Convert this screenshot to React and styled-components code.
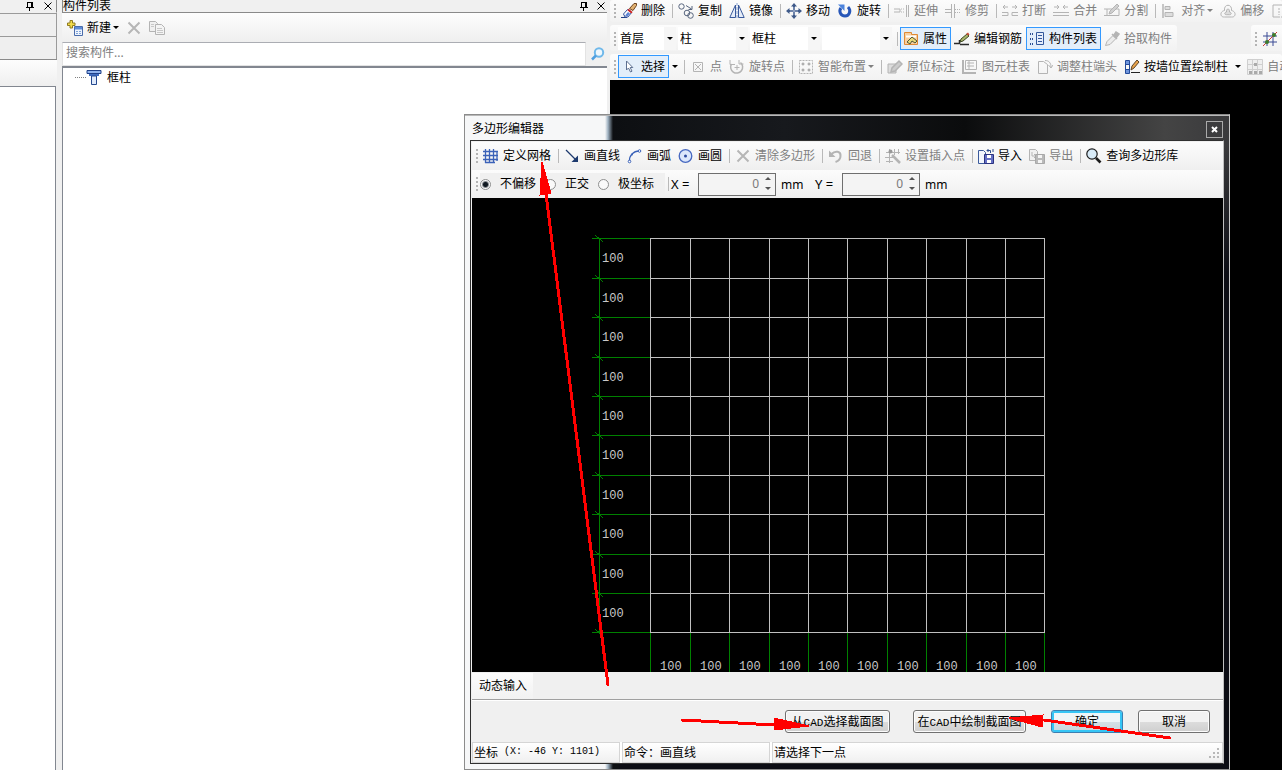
import React, { useState } from "react";
import styled, { createGlobalStyle } from "styled-components";

const GlobalStyle = createGlobalStyle`
  * {
    box-sizing: border-box;
  }
  body {
    margin: 0;
    background: #000;
    overflow: hidden;
  }
  body, button, input, select {
    font-family: "Noto Sans", "Noto Sans CJK SC", sans-serif;
    font-size: 12px;
    color: #000;
  }
`;

const Page = styled.div`
  display: flex;
  position: relative;
  min-height: 100vh;
  overflow: hidden;
  background: #f0f0f0;
`;

/* ---------- docked panels ---------- */

const SidePanel = styled.aside`
  display: flex;
  flex-direction: column;
  flex: 0 0 57px;
`;

const PanelHeader = styled.header`
  display: flex;
  align-items: center;
  gap: ${(props) => (props.$side ? "10px" : "9px")};
  height: 13px;
  padding-right: ${(props) => (props.$side ? "4px" : "2px")};
  border-bottom: 1px solid ${(props) => (props.$side ? "#f0f0f0" : "#8a8a8a")};
  border-left: ${(props) => (props.$side ? "none" : "1px solid #8a8a8a")};
  border-right: ${(props) => (props.$side ? "1px solid #8a8a8a" : "none")};
`;

const PanelTitle = styled.h2`
  flex: 1;
  margin: 0;
  font-size: 12px;
  font-weight: normal;
  line-height: 12px;
  white-space: nowrap;
`;

const HeaderButton = styled.button`
  display: flex;
  padding: 0;
  border: 0;
  background: none;
`;

const SideRow = styled.div`
  height: 23px;
  border-top: 1px solid #9a9a9a;
  border-right: 1px solid #9a9a9a;
  background: #efefef;
`;

const SideBar = styled.div`
  height: 27px;
  border-top: 1px solid #8a8a8a;
  background: linear-gradient(#fdfdfd, #efefef);
`;

const SideBody = styled.div`
  flex: 1;
  margin-right: 1px;
  border-top: 1px solid #828790;
  border-right: 1px solid #828790;
  background: #fff;
`;

const ComponentPanel = styled.section`
  display: flex;
  flex-direction: column;
  flex: 0 0 545px;
  margin: 0 3px 0 5px;
`;

const PanelTools = styled.div`
  display: flex;
  align-items: center;
  height: 29px;
  padding-left: 2px;
  background: linear-gradient(#fdfdfd, #efefef);
`;

const SearchRow = styled.div`
  display: flex;
  align-items: center;
  height: 24px;
`;

const SearchInput = styled.input`
  flex: 1;
  height: 24px;
  padding: 0 3px 3px;
  border: 1px solid #e3e3e3;
  border-top-color: #abadb3;
  outline: none;

  &::placeholder {
    color: #808080;
  }
`;

const SearchButton = styled.button`
  display: flex;
  padding: 0 1px 0 4px;
  border: 0;
  background: none;
`;

const Tree = styled.ul`
  flex: 1;
  margin: 0;
  padding: 0 0 0 12px;
  list-style: none;
  border-top: 2px solid #828790;
  border-left: 1px solid #828790;
  background: #fff;
`;

const TreeItem = styled.li`
  display: flex;
  align-items: center;
  height: 18px;
  gap: 5px;

  &::before {
    content: "";
    width: 11px;
    margin-right: -5px;
    border-top: 1px dotted #808080;
  }
`;

/* ---------- toolbars ---------- */

const Workspace = styled.main`
  flex: 1;
  min-width: 0;
  background: #000;
`;

const BarStack = styled.div`
  display: flex;
  flex-direction: column;
  gap: 3px;
  overflow: hidden;
  background: #f0f0f0;
`;

const BarLine = styled.div`
  display: flex;
  gap: 74px;
`;

const Bar = styled.div`
  display: flex;
  align-items: center;
  height: ${(props) => (props.$first ? "22px" : "26px")};
  padding: ${(props) => (props.$low ? "1px 1px 0 0" : "0 1px 1px 0")};
  border-radius: 3px;
  background: linear-gradient(#fcfcfc, #f2f2f2);
`;

const Grip = styled.span`
  flex: none;
  width: 2px;
  height: 14px;
  margin: 0 2px 0 4px;
  background: repeating-linear-gradient(#b4b4b4 0 2px, transparent 2px 4px);
`;

const Tool = styled.button`
  display: flex;
  align-items: center;
  flex: none;
  gap: 4px;
  height: 23px;
  padding: 0 4px 0 3px;
  border: 0;
  background: ${(props) => (props.$active ? "#e3eefa" : "none")};
  box-shadow: ${(props) => (props.$active ? "inset 0 0 0 1px #3399ff" : "none")};
  line-height: 16px;
  white-space: nowrap;

  &:disabled {
    color: #808080;
  }
`;

const SplitButton = styled.button`
  display: flex;
  align-items: center;
  justify-content: center;
  flex: none;
  width: 12px;
  height: 23px;
  padding: 0;
  border: 0;
  background: none;
`;

const Caret = styled.span`
  width: 6px;
  margin-left: ${(props) => (props.$inTool ? "-2px" : "0")};
  border: 3px solid transparent;
  border-top-color: currentColor;
  border-bottom: 0;
`;

const Divider = styled.span`
  flex: none;
  width: 1px;
  height: 14px;
  margin: 0 2px 0 3px;
  background: #b9b9b9;
`;

const SelectBox = styled.label`
  display: flex;
  align-items: center;
  position: relative;
  flex: none;
  width: ${(props) => props.$width}px;
  height: 23px;
  margin-right: 2px;
  background: linear-gradient(to left, #f6f6f6 12px, #fff 12px);

  & > span {
    position: absolute;
    right: 3px;
    pointer-events: none;
  }
`;

const Select = styled.select`
  appearance: none;
  width: 100%;
  height: 23px;
  padding: 0 12px 0 2px;
  border: 0;
  outline: none;
  background: none;
`;

/* ---------- dialog ---------- */

const Dialog = styled.section`
  position: absolute;
  top: 114px;
  left: 464px;
  width: 766px;
  padding: 1px 5px 5px;
  border: 1px solid #8c8c8c;
  border-right-color: #c8c8c8;
  background:
    linear-gradient(transparent 30px, #0c0d14 160px) right / 610px 100% no-repeat,
    linear-gradient(to right, #f6f7f8 140px, #9fb2c2 143px, #0d0f12 148px, #17191d 320px, #0b0c0d 500px, #444 700px, #3a3a3c 100%);
  box-shadow: inset 0 1px 0 #b8b8b8;
`;

const TitleBar = styled.header`
  display: flex;
  align-items: center;
  justify-content: space-between;
  height: 24px;
  padding: 0 1px 0 2px;
`;

const DialogTitle = styled.h1`
  margin: 0;
  font-size: 12px;
  font-weight: normal;
`;

const CloseButton = styled.button`
  display: flex;
  align-items: center;
  justify-content: center;
  width: 17px;
  height: 17px;
  margin-top: 2px;
  padding: 0;
  border: 1px solid #aaa;
  background: #3c3c3e;
`;

const DialogBody = styled.div`
  border: 1px solid #303030;
  border-right-color: #c0c0c0;
  background: #f0f0f0;
  padding-top: 1px;
  padding-left: 1px;
`;

const DialogBar = styled.div`
  display: flex;
  align-items: center;
  height: 28px;
  background: linear-gradient(#fcfcfc, #efefef);
`;

const RadioGroup = styled.fieldset`
  display: flex;
  gap: 9px;
  margin: 0;
  padding: 3px 11px 3px 0;
  border: 0;
  background: #f0f0f0;
`;

const RadioLabel = styled.label`
  display: flex;
  align-items: center;
  gap: 9px;
  line-height: 16px;
`;

const Radio = styled.input`
  appearance: none;
  width: 11px;
  height: 11px;
  margin: 0;
  border: 1px solid #8e8f8f;
  border-radius: 50%;
  background: #fafafa;

  &:checked {
    background: radial-gradient(#101820 0 2px, #fafafa 4px);
  }
`;

const AxisLabel = styled.label`
  width: 27px;
  font-size: 13px;
  white-space: nowrap;
`;

const Unit = styled.span`
  width: 39px;
  padding-left: 5px;
`;

const SpinBox = styled.div`
  display: flex;
  width: 78px;
  height: 23px;
  border: 1px solid #6f6f6f;
  background: #f4f4f4;
`;

const SpinInput = styled.input`
  flex: 1;
  min-width: 0;
  padding: 0 5px 2px 0;
  border: 0;
  outline: none;
  background: none;
  color: #7a7a7a;
  text-align: right;
`;

const SpinButtons = styled.div`
  display: flex;
  flex-direction: column;
  justify-content: space-between;
  padding: 3px 3px 3px 0;
`;

const SpinButton = styled.button`
  display: flex;
  justify-content: center;
  width: 8px;
  height: 5px;
  padding: 0;
  border: 0;
  background: none;
`;

const Canvas = styled.svg`
  display: block;
  width: 100%;
  height: 474px;
  background: #000;
  font-family: "Liberation Mono", monospace;
  font-size: 12px;
`;

const TabRow = styled.div`
  display: flex;
  height: 28px;
  padding-top: 1px;
  border-bottom: 1px solid #a0a0a0;
`;

const Tab = styled.button`
  padding: 0 6px 2px 7px;
  border: 0;
  background: linear-gradient(#fcfcfc, #f2f2f2);
`;

const Actions = styled.footer`
  display: flex;
  align-items: center;
  justify-content: flex-end;
  height: 42px;
  padding-right: 13px;
  border-top: 1px solid #fff;
`;

const ActionButton = styled.button`
  width: ${(props) => props.$width}px;
  height: 23px;
  margin-left: ${(props) => props.$gap}px;
  padding: 0 0 2px;
  border: 1px solid ${(props) => (props.$primary ? "#3c7fb1" : "#707070")};
  border-radius: 3px;
  background: ${(props) =>
    props.$primary
      ? "linear-gradient(#eef5f8 50%, #d5e1e7 50%, #c8d6dc)"
      : "linear-gradient(#f2f2f2 50%, #dddddd 50%, #cfcfcf)"};
  box-shadow: inset 0 0 0 ${(props) => (props.$primary ? "2px #35c5f5" : "1px #fcfcfc")};
  white-space: nowrap;
`;

const Latin = styled.span`
  font-family: "Liberation Mono", monospace;
  font-size: ${(props) => (props.$small ? "10px" : "11px")};
`;

const StatusBar = styled.div`
  display: flex;
  gap: 2px;
  height: 21px;
  background: #fff;
`;

const StatusCell = styled.div`
  display: flex;
  align-items: center;
  flex: ${(props) => (props.$grow ? "1" : "0 0 148px")};
  padding: 0 0 2px 1px;
  border: 1px solid #d5d5d5;
  background: linear-gradient(#fff, #f0f0f0);
  white-space: pre;

  & > svg {
    align-self: flex-end;
    margin-left: auto;
  }
`;

const Arrows = styled.svg`
  position: absolute;
  top: 0;
  left: 0;
  width: 100%;
  height: 100%;
  overflow: visible;
  pointer-events: none;
`;

/* ---------- icons ---------- */

const G = "#b4b4b4";
const NAVY = "#1d3a6e";
const BLUE = "#3b62b8";

const drawings = {
  erase: (
    <>
      <path d="M0 14.500h6M3 12.500h3" stroke="#223f86" />
      <path d="M2.500 11l4-4.500 4 3-3.500 4.500H4z" fill="#fff" stroke="#31509c" />
      <path d="M4 12.500l3-3.500 2 1.500-2.500 3z" fill="#5f86d4" />
      <path d="M8.500 5.500L13 .5h2.500v2l-3.500 5z" fill="#e0b070" stroke="#6d4420" />
      <path d="M7 6.500l4 3.200" stroke="#c22" strokeWidth="2" />
    </>
  ),
  copy: (
    <>
      <circle cx="3.500" cy="3.500" r="2.700" stroke="#57657e" />
      <circle cx="9" cy="10" r="2.800" stroke="#57657e" />
      <circle cx="12.500" cy="12.500" r="2.800" stroke="#57657e" />
      <path d="M8 2.500l5.500 3.500M14 3v3.500h-3.500" stroke="#57657e" />
    </>
  ),
  mirror: (
    <>
      <path d="M6.500 2v12.500H.8zM9.500 2v12.500h5.700z" stroke="#3a5a9c" fill="#e6edf9" />
      <path d="M8 0v16" stroke="#8aa2cf" strokeDasharray="3 1" />
    </>
  ),
  move: (
    <>
      <path d="M8 2v12M2 8h12" stroke="#3f5a8a" strokeWidth="2" />
      <path d="M8 0l3 3.500H5zM8 16l3-3.500H5zM0 8l3.500-3v6zM16 8l-3.500-3v6z" fill="#3f5a8a" />
      <path d="M8 4v8M4 8h8" stroke="#dfe8f6" strokeWidth=".6" />
    </>
  ),
  rotate: (
    <>
      <path d="M4 5C1.500 8 3.500 13 8 13s6.500-5.500 3-9" stroke="#2857b8" strokeWidth="3" />
      <path d="M1 1.500h6.500V8z" fill="#4c83dd" />
    </>
  ),
  extend: (
    <>
      <path d="M0 6h6v3H0" stroke={G} />
      <path d="M7 6h4M7 9h4" stroke={G} strokeDasharray="1 1" />
      <path d="M12.500 2v12M14.500 2v12" stroke={G} />
    </>
  ),
  trim: (
    <>
      <path d="M6.500 1v14M9.500 1v14" stroke={G} />
      <path d="M0 6.500h6M0 9.500h6" stroke={G} />
      <path d="M10 6.500h6M10 9.500h6" stroke={G} strokeDasharray="1 1" />
    </>
  ),
  breakLine: (
    <>
      <path d="M1 4h5M3 2L1 4l2 2M10 4h5M13 2l2 2-2 2" stroke={G} />
      <path d="M0 9.500h6v3H0M16 9.500h-6v3h6" stroke={G} />
    </>
  ),
  merge: (
    <>
      <path d="M1 4h5M4 2l2 2-2 2M10 4h5M12 2l-2 2 2 2" stroke={G} />
      <path d="M0 9.500h16M0 12.500h16" stroke={G} />
    </>
  ),
  split: (
    <>
      <path d="M0 6h8M0 12.500h15V6h-3M3 6v6" stroke={G} />
      <path d="M5 11l1-3 7-7 2 2-7 7z" fill="#d0d0d0" stroke={G} />
    </>
  ),
  align: (
    <>
      <path d="M2 1v14" stroke={G} strokeWidth="1.500" />
      <path d="M4 3.500h5v3H4zM4 9.500h8v4H4z" fill="#ddd" stroke={G} />
    </>
  ),
  offset: (
    <>
      <path d="M4.500 7.500c-1-7 8-7 7 0 5 1 4.500 7 0 6.500h-7c-4.500.5-5-5.500 0-6.500z" stroke={G} />
      <path d="M6.500 9c-.5-4 3.500-4 3 0 2.500.5 2 3 0 2.700h-3c-2 .3-2.500-2.200 0-2.700z" fill="#ddd" stroke={G} />
    </>
  ),
  stretch: (
    <>
      <path d="M9 2H2v12h7" stroke={G} />
      <path d="M9 2h6v12H9M8 5v7" stroke={G} strokeDasharray="2 1" />
    </>
  ),
  properties: (
    <>
      <path d="M1.500 1.500h7v2h6v10h-13z" fill="#f8cfa0" stroke="#e08a35" />
      <path d="M3 4.500h10v2H3z" fill="#fff" />
      <path d="M4 11l5-5 5 4-2 2-3-2-2 3z" fill="#e9d978" stroke="#4f5636" />
    </>
  ),
  editRebar: (
    <>
      <path d="M0 12.500h5.500V9M6 13.500h9" stroke="#2a2a2a" strokeWidth="1.500" />
      <path d="M6 11l1-3 6-5 2 2-6 5z" fill="#a8b46a" stroke="#3f4a25" />
      <path d="M12 3l2-1.500 1.500 2-1.500 1z" fill="#c64a34" />
    </>
  ),
  list: (
    <>
      <path d="M1 3h4M1 8h4M1 13h4" stroke="#2a4e94" strokeWidth="2" strokeDasharray="1 1" />
      <path d="M7.500 1.500h7v12h-7z" fill="#e6eefb" stroke="#34599c" />
      <path d="M9 4.500h4M9 7.500h4M9 10.500h4" stroke="#34599c" />
    </>
  ),
  picker: (
    <>
      <path d="M1.500 14.500l1.500-4 6-6 3 3-6 6z" fill="#ececec" stroke={G} />
      <path d="M8 3l5 5M10 4l2-3 3 2-3 4z" fill={G} stroke={G} strokeWidth="1.500" />
    </>
  ),
  axis: (
    <>
      <path d="M5 1v14M11 1v14M1 5h14M1 11h14" stroke="#3a4a94" />
      <path d="M1 15L15 1" stroke="#c33" />
      <circle cx="12" cy="4" r="2" fill="#3b7c2d" />
      <circle cx="5" cy="11" r="2" fill="#3b7c2d" />
    </>
  ),
  ruler: <path d="M1 2h13v12H1z" fill="#f5d76e" stroke="#bf9020" />,
  pointer: <path d="M5.500 2v9l2-2 2 4 1.500-.8-1.800-3.700h2.600z" fill="#fff" stroke="#5d6f90" />,
  point: <path d="M3.500 3.500h9v9h-9zM5 5l6 6M11 5l-6 6" stroke={G} />,
  rotatePoint: (
    <>
      <path d="M2.500 5a6 6 0 1 0 9-1.500" stroke={G} strokeWidth="1.500" />
      <path d="M1 1v4.500h5M10 1v4h4.500M8 6v5M5.500 8.500h5" stroke={G} />
    </>
  ),
  smart: (
    <>
      <path d="M1.500 1.500h13v13h-13z" stroke={G} strokeDasharray="2 1" />
      <path d="M5 3.500v3M3.500 5h3M11 3.500v3M9.500 5h3M5 9.500v3M3.500 11h3M11 9.500v3M9.500 11h3" stroke="#969696" />
    </>
  ),
  note: (
    <>
      <path d="M1 5h8v9H1z" fill="#ddd" stroke={G} />
      <path d="M4 13l1-4 7-7 3 3-7 7z" fill="#ccc" stroke={G} strokeWidth="1.500" />
    </>
  ),
  table: (
    <>
      <path d="M3.500 1.500h11v9h-11zM5 4h7M5 7h7M7 2v8" stroke={G} />
      <path d="M1 1v13h13" stroke={G} strokeWidth="2" />
    </>
  ),
  head: (
    <>
      <path d="M1.500 2.500h5l4 3v9h-9z" stroke={G} />
      <path d="M8 1.500c4 0 6 2.500 6 6.500M11.500 6l2.500 3 2-3" stroke={G} />
    </>
  ),
  wallColumn: (
    <>
      <path d="M1.500 1.500h4v4h-4zM1.500 10.500h4v4h-4z" fill="#6f95dc" stroke="#244b9a" />
      <path d="M1.500 5v6M5.500 5v6" stroke="#244b9a" />
      <path d="M7 13.500h9" stroke="#222" />
      <path d="M7 11l1-4 5-6 2 2-5 6z" fill="#e8a24a" stroke="#5c4528" />
    </>
  ),
  auto: (
    <>
      <path d="M.5.500h15v15H.5zM.5 5.500h15M.5 10.500h15M5.500.5v15M10.500.5v15" fill="#efefef" stroke="#cfcfcf" />
      <path d="M7 4h3v3H7zM2 12h3v3H2zM7 12h3v3H7zM12 12h3v3h-3z" fill="#aaa" />
    </>
  ),
  create: (
    <>
      <path d="M7.500 6.500h8v9h-8z" fill="#eef4fd" stroke="#4a6cab" />
      <path d="M8 7h7v2.500H8z" fill="#5f8cd8" />
      <path d="M9 11.500h2M12 11.500h2M9 13.500h2M12 13.500h2" stroke="#7ea2d8" />
      <path d="M3 .5h2.500V3H8v2.500H5.500V8H3V5.500H.5V3H3z" fill="#f3dc4a" stroke="#8f7a20" />
    </>
  ),
  remove: <path d="M2.500 2.500l11 11M13.500 2.500l-11 11" stroke="#b6b6b6" strokeWidth="2" />,
  paste: (
    <>
      <path d="M.5 1.500h6l2 2v8h-8z" fill="#f0f0f0" stroke={G} />
      <path d="M6.500 4.500h6l3 3v7h-9z" fill="#f4f4f4" stroke={G} />
      <path d="M8 8.500h5M8 10.500h6M8 12.500h6M2 4.500h3M2 6.500h3" stroke="#c8c8c8" />
    </>
  ),
  lens: (
    <>
      <circle cx="9" cy="6.500" r="4.200" stroke="#6fb8ea" strokeWidth="2" fill="#eef7fd" />
      <path d="M6 9.500l-4 4" stroke="#4e9fe0" strokeWidth="2.500" />
    </>
  ),
  column: (
    <>
      <path d="M1 1.500h14v3H1z" fill="#8fb2ec" stroke="#1f4088" />
      <path d="M3 5h10v2H3z" fill="#3f6cc0" />
      <path d="M5.500 7h5v8.500h-5z" fill="#dfeafc" stroke="#24488f" />
    </>
  ),
  grid: (
    <path d="M2.500 1v14M6.500 1v14M10.500 1v14M14 3v10M0 3.500h15M0 7.500h15M0 11.500h15M2 14.500h10" stroke={BLUE} strokeWidth="1.300" />
  ),
  line: (
    <>
      <path d="M2 2l10 10" stroke={NAVY} strokeWidth="1.300" />
      <path d="M14 7.500V14H7.500z" fill={NAVY} />
    </>
  ),
  arc: (
    <>
      <path d="M2.500 13.500C2 8 6 3 12.500 3" stroke={BLUE} strokeWidth="1.300" />
      <circle cx="2.500" cy="13.500" r="1.300" fill="#fff" stroke={BLUE} />
      <circle cx="12.500" cy="3" r="1.300" fill="#fff" stroke={BLUE} />
      <circle cx="5" cy="6.500" r="1" fill={BLUE} />
    </>
  ),
  circle: (
    <>
      <circle cx="7.500" cy="8" r="6.300" fill="#dbe6fb" stroke="#4668c0" strokeWidth="1.300" />
      <circle cx="7.500" cy="8" r="1.500" fill="#2c4aa0" />
    </>
  ),
  undo: (
    <>
      <path d="M3.500 6c4-4 9.500-2.500 9 2 0 3-2 5-5 6" stroke={G} strokeWidth="2" />
      <path d="M1 2.500V9h6.500z" fill={G} />
    </>
  ),
  insertPoint: (
    <>
      <path d="M4.500 1v14M9.500 1v6M1 4.500h14M0 9.500h8M13.500 1v5M1 13.500h7" stroke={G} />
      <circle cx="5.500" cy="3.500" r="2" fill="#999" />
      <path d="M7 7l8 8" stroke={G} strokeWidth="2.500" />
    </>
  ),
  importFile: (
    <>
      <path d="M.5 2.500h5l2 2v11h-7z" fill="#f2f6fd" stroke="#3b5a9c" />
      <path d="M6.500 6.500h9v9h-9z" fill="#6570c4" stroke="#2b3380" />
      <path d="M9 7h4v3H9zM9 12h4v3H9z" fill="#fff" />
      <path d="M9 2.500h3.500V5M10.500 1L9 2.500 10.500 4M15 1v3" stroke="#2b4a8c" />
    </>
  ),
  exportFile: (
    <>
      <path d="M.5 1.500h6l2 2v9h-8zM3 4v4h4M5 6l2 2-2 2" fill="#f1f1f1" stroke={G} />
      <path d="M6.500 6.500h9v9h-9z" fill="#b9b9b9" stroke="#a8a8a8" />
      <path d="M9 7h4v3H9zM9 12h4v3H9z" fill="#f4f4f4" />
    </>
  ),
  search: (
    <>
      <circle cx="6" cy="6" r="5.200" fill="#d8ebf8" stroke="#1c1c1c" strokeWidth="1.200" />
      <path d="M10 10l4.500 4.500" stroke="#1c1c1c" strokeWidth="2.600" />
    </>
  ),
};

const Icon = ({ name }) => (
  <svg width="16" height="16" viewBox="0 0 16 16" fill="none" aria-hidden="true">
    {drawings[name]}
  </svg>
);

const PinIcon = () => (
  <svg width="8" height="10" viewBox="0 0 8 10" fill="none" shapeRendering="crispEdges">
    <path d="M1 1.500h5M1.500 1v5M0 6.500h8M3.500 6v4" stroke="#000" />
    <path d="M6 1v5" stroke="#000" strokeWidth="2" />
  </svg>
);

const CrossIcon = () => (
  <svg width="8" height="8" viewBox="0 0 8 8" fill="none">
    <path d="M.5.500l7 7M7.500.5l-7 7" stroke="#000" />
  </svg>
);

/* ---------- data ---------- */

const modifyTools = [
  { icon: "erase", label: "删除" },
  "|",
  { icon: "copy", label: "复制" },
  { icon: "mirror", label: "镜像" },
  "|",
  { icon: "move", label: "移动" },
  { icon: "rotate", label: "旋转" },
  "|",
  { icon: "extend", label: "延伸", disabled: true },
  { icon: "trim", label: "修剪", disabled: true },
  "|",
  { icon: "breakLine", label: "打断", disabled: true },
  { icon: "merge", label: "合并", disabled: true },
  { icon: "split", label: "分割", disabled: true },
  "|",
  { icon: "align", label: "对齐", disabled: true, menu: true },
  { icon: "offset", label: "偏移", disabled: true },
  { icon: "stretch", disabled: true },
];

const viewTools = [
  { icon: "properties", label: "属性", active: true },
  { icon: "editRebar", label: "编辑钢筋" },
  { icon: "list", label: "构件列表", active: true },
  { icon: "picker", label: "拾取构件", disabled: true },
];

const drawTools = [
  { icon: "pointer", label: "选择", active: true, split: true },
  "|",
  { icon: "point", label: "点", disabled: true },
  { icon: "rotatePoint", label: "旋转点", disabled: true },
  "|",
  { icon: "smart", label: "智能布置", disabled: true, menu: true },
  "|",
  { icon: "note", label: "原位标注", disabled: true },
  { icon: "table", label: "图元柱表", disabled: true },
  { icon: "head", label: "调整柱端头", disabled: true },
  { icon: "wallColumn", label: "按墙位置绘制柱", split: true },
  { icon: "auto", label: "自动", disabled: true },
];

const polygonTools = [
  { icon: "grid", label: "定义网格" },
  "|",
  { icon: "line", label: "画直线" },
  { icon: "arc", label: "画弧" },
  { icon: "circle", label: "画圆" },
  "|",
  { icon: "remove", label: "清除多边形", disabled: true },
  "|",
  { icon: "undo", label: "回退", disabled: true },
  "|",
  { icon: "insertPoint", label: "设置插入点", disabled: true },
  "|",
  { icon: "importFile", label: "导入" },
  { icon: "exportFile", label: "导出", disabled: true },
  "|",
  { icon: "search", label: "查询多边形库" },
];

const filters = [
  { name: "楼层", value: "首层", width: 58 },
  { name: "构件类型", value: "柱", width: 70 },
  { name: "构件", value: "框柱", width: 70 },
  { name: "名称", value: "", width: 70 },
];

const offsets = ["不偏移", "正交", "极坐标"];

/* ---------- parts ---------- */

const Tools = ({ items }) =>
  items.map((item, i) =>
    item === "|" ? (
      <Divider key={i} />
    ) : (
      <React.Fragment key={i}>
        <Tool disabled={item.disabled} $active={item.active}>
          <Icon name={item.icon} />
          {item.label}
          {item.menu && <Caret $inTool />}
        </Tool>
        {item.split && (
          <SplitButton aria-label={item.label}>
            <Caret />
          </SplitButton>
        )}
      </React.Fragment>
    )
  );

const Axis = ({ name }) => {
  const [value, setValue] = useState(0);
  return (
    <>
      <AxisLabel htmlFor={"axis" + name}>{name} =</AxisLabel>
      <SpinBox>
        <SpinInput id={"axis" + name} value={value} onChange={(e) => setValue(Number(e.target.value) || 0)} />
        <SpinButtons>
          <SpinButton aria-label="+" onClick={() => setValue(value + 1)}>
            <svg width="6" height="3"><path d="M0 3l3-3 3 3z" fill="#555" /></svg>
          </SpinButton>
          <SpinButton aria-label="-" onClick={() => setValue(value - 1)}>
            <svg width="6" height="3"><path d="M0 0l3 3 3-3z" fill="#555" /></svg>
          </SpinButton>
        </SpinButtons>
      </SpinBox>
      <Unit>mm</Unit>
    </>
  );
};

const COUNT = 10;
const LEFT = 178;
const TOP = 40;
const SIZE = 394;

const GridCanvas = () => {
  const lines = [];
  for (let i = 0; i <= COUNT; i++) {
    lines.push(Math.ceil((SIZE * i) / COUNT));
  }
  return (
    <Canvas>
      <g shapeRendering="crispEdges" fill="none">
        <path d={`M127.500 ${TOP}v${SIZE}`} stroke="#008000" />
        {lines.map((d) => (
          <React.Fragment key={d}>
            <path d={`M120 ${TOP + d + 0.5}H${LEFT}M${LEFT + d + 0.5} ${TOP + SIZE}v60`} stroke="#008000" />
            <path d={`M123 ${TOP + d - 3}l8 7`} stroke="#008000" />
            <path
              d={`M${LEFT} ${TOP + d + 0.5}h${SIZE + 1}M${LEFT + d + 0.5} ${TOP}v${SIZE}`}
              stroke="#c0c0c0"
            />
          </React.Fragment>
        ))}
      </g>
      <g fill="#c8c8c8">
        {lines.slice(0, COUNT).map((d) => (
          <React.Fragment key={d}>
            <text x="130" y={TOP + d + 24}>100</text>
            <text x={LEFT + d + 10} y="472">100</text>
          </React.Fragment>
        ))}
      </g>
    </Canvas>
  );
};

const PolygonDialog = () => {
  const [offset, setOffset] = useState(offsets[0]);
  return (
    <Dialog role="dialog" aria-labelledby="dialogTitle">
      <TitleBar>
        <DialogTitle id="dialogTitle">多边形编辑器</DialogTitle>
        <CloseButton aria-label="关闭">
          <svg width="7" height="7" viewBox="0 0 7 7">
            <path d="M1 1l5 5M6 1L1 6" stroke="#fff" strokeWidth="2" />
          </svg>
        </CloseButton>
      </TitleBar>
      <DialogBody>
        <DialogBar>
          <Grip />
          <Tools items={polygonTools} />
        </DialogBar>
        <DialogBar>
          <Grip />
          <RadioGroup>
            {offsets.map((name) => (
              <RadioLabel key={name}>
                <Radio type="radio" name="offset" checked={offset === name} onChange={() => setOffset(name)} />
                {name}
              </RadioLabel>
            ))}
          </RadioGroup>
          <Divider />
          <Axis name="X" />
          <Axis name="Y" />
        </DialogBar>
        <GridCanvas />
        <TabRow>
          <Tab>动态输入</Tab>
        </TabRow>
        <Actions>
          <ActionButton $width={105} $gap={0}>从<Latin>CAD</Latin>选择截面图</ActionButton>
          <ActionButton $width={113} $gap={23}>在<Latin>CAD</Latin>中绘制截面图</ActionButton>
          <ActionButton $width={72} $gap={25} $primary>确定</ActionButton>
          <ActionButton $width={72} $gap={15}>取消</ActionButton>
        </Actions>
        <StatusBar>
          <StatusCell>坐标<Latin $small> (X: -46 Y: 1101)</Latin></StatusCell>
          <StatusCell>命令：画直线</StatusCell>
          <StatusCell $grow>
            请选择下一点
            <svg width="14" height="14" viewBox="0 0 14 14">
              <path d="M9 2h2v2H9zM5 6h2v2H5zM9 6h2v2H9zM1 10h2v2H1zM5 10h2v2H5zM9 10h2v2H9z" fill="#b8b8b8" />
            </svg>
          </StatusCell>
        </StatusBar>
      </DialogBody>
      <Arrows aria-hidden="true" shapeRendering="crispEdges">
        <g fill="#f00" stroke="#f00" strokeWidth="3">
          <path d="M81 79L143 570M217 605l93 5M579 605l126 18" strokeLinecap="round" />
          <path d="M77 47l9 31-11 2zM344 611l-35-8v12zM544 603l34-3-1 12z" strokeWidth="1" />
        </g>
      </Arrows>
    </Dialog>
  );
};

const App = () => {
  return (
    <>
      <GlobalStyle />
      <Page>
        <SidePanel>
          <PanelHeader $side>
            <PanelTitle />
            <HeaderButton aria-label="固定"><PinIcon /></HeaderButton>
            <HeaderButton aria-label="关闭"><CrossIcon /></HeaderButton>
          </PanelHeader>
          <SideRow />
          <SideRow />
          <SideBar />
          <SideBody />
        </SidePanel>

        <ComponentPanel>
          <PanelHeader>
            <PanelTitle>构件列表</PanelTitle>
            <HeaderButton aria-label="固定"><PinIcon /></HeaderButton>
            <HeaderButton aria-label="关闭"><CrossIcon /></HeaderButton>
          </PanelHeader>
          <PanelTools>
            <Tool>
              <Icon name="create" />
              新建
              <Caret $inTool />
            </Tool>
            <Tool disabled aria-label="删除"><Icon name="remove" /></Tool>
            <Tool disabled aria-label="复制"><Icon name="paste" /></Tool>
          </PanelTools>
          <SearchRow>
            <SearchInput aria-label="搜索构件" placeholder="搜索构件..." />
            <SearchButton aria-label="搜索"><Icon name="lens" /></SearchButton>
          </SearchRow>
          <Tree>
            <TreeItem>
              <Icon name="column" />
              框柱
            </TreeItem>
          </Tree>
        </ComponentPanel>

        <Workspace>
          <BarStack>
            <Bar $first>
              <Grip />
              <Tools items={modifyTools} />
            </Bar>
            <BarLine>
              <Bar $low>
                <Grip />
                {filters.map((f) => (
                  <SelectBox key={f.name} $width={f.width}>
                    <Select aria-label={f.name} defaultValue={f.value}>
                      <option>{f.value}</option>
                    </Select>
                    <Caret />
                  </SelectBox>
                ))}
                <Divider />
                <Tools items={viewTools} />
              </Bar>
              <Bar $low>
                <Grip />
                <Tool aria-label="轴线"><Icon name="axis" /></Tool>
                <Tool aria-label="标尺"><Icon name="ruler" /></Tool>
              </Bar>
            </BarLine>
            <Bar>
              <Grip />
              <Tools items={drawTools} />
            </Bar>
          </BarStack>
        </Workspace>

        <PolygonDialog />
      </Page>
    </>
  );
};

export default App;
